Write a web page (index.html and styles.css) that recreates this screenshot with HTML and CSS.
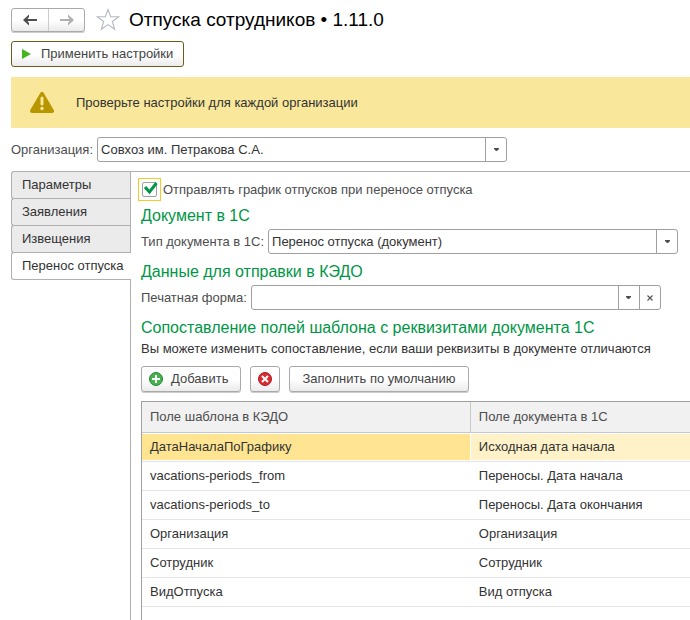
FILE: index.html
```html
<!DOCTYPE html>
<html lang="ru">
<head>
    <meta charset="UTF-8">
    <meta name="viewport" content="width=device-width, initial-scale=1.0">
    <title>Отпуска сотрудников</title>
    <link rel="stylesheet" href="styles.css">
</head>
<body>
    <div class="page">
        <header class="header">
            <div class="nav-buttons">
                <button class="nav-button" type="button" aria-label="Назад">
                    <svg width="14" height="12" viewBox="0 0 14 12"><path d="M0 6L6 .5V3L4.500 5H14v2H4.500L6 9v2.500z" fill="#4d4d4d"/></svg>
                </button>
                <button class="nav-button" type="button" aria-label="Вперед">
                    <svg width="14" height="12" viewBox="0 0 14 12"><path d="M14 6L8 .5V3l1.500 2H0v2h9.500L8 9v2.500z" fill="#b0b0b0"/></svg>
                </button>
            </div>
            <button class="star-button" type="button" aria-label="В избранное">
                <svg width="24" height="23" viewBox="0 0 24 23"><path d="M12 1.500l2.700 7.200h8l-6.400 4.800 2.400 7.800L12 16.600l-6.700 4.700 2.400-7.800L1.300 8.700h8z" fill="#fff" stroke="#b3bac2" stroke-width="1.100"/></svg>
            </button>
            <h1 class="title">Отпуска сотрудников • 1.11.0</h1>
        </header>

        <div class="command-bar">
            <button class="button button-primary" type="button">
                <svg width="10" height="12" viewBox="0 0 10 12"><path d="M0 1l9 5-9 5z" fill="#43b51f"/></svg>
                Применить настройки
            </button>
        </div>

        <div class="warning">
            <svg width="24" height="21" viewBox="0 0 24 21">
                <path d="M12 2L22 19H2z" fill="#b89600" stroke="#b89600" stroke-width="4" stroke-linejoin="round"/>
                <path d="M12 6v6" stroke="#f9e79b" stroke-width="3" stroke-linecap="round"/>
                <circle cx="12" cy="16.500" r="1.700" fill="#f9e79b"/>
            </svg>
            <span>Проверьте настройки для каждой организации</span>
        </div>

        <div class="field field-organization">
            <label for="organization">Организация:</label>
            <div class="combo">
                <select id="organization">
                    <option>Совхоз им. Петракова С.А.</option>
                </select>
                <button class="combo-button" type="button" aria-label="Выбрать организацию">
                    <svg width="5" height="3" viewBox="0 0 5 3"><path d="M0 0h5v1L3 3H2L0 1z" fill="#4d4d4d"/></svg>
                </button>
            </div>
        </div>

        <div class="workspace">
            <nav class="tabs">
                <button class="tab" type="button">Параметры</button>
                <button class="tab" type="button">Заявления</button>
                <button class="tab" type="button">Извещения</button>
                <button class="tab active" type="button">Перенос отпуска</button>
            </nav>

            <main class="panel">
                <div class="check-row">
                    <span class="check-focus"><input class="checkbox" type="checkbox" id="sendSchedule" checked>
                        <svg class="check-mark" width="15" height="13" viewBox="0 0 15 13"><path d="M1 5L5.500 10L12.500 1" fill="none" stroke="#009646" stroke-width="3"/></svg>
                    </span>
                    <label for="sendSchedule">Отправлять график отпусков при переносе отпуска</label>
                </div>

                <h2 class="section-title">Документ в 1С</h2>
                <div class="field">
                    <label for="documentType">Тип документа в 1С:</label>
                    <div class="combo">
                        <select id="documentType">
                            <option>Перенос отпуска (документ)</option>
                        </select>
                        <button class="combo-button" type="button" aria-label="Выбрать тип документа">
                            <svg width="5" height="3" viewBox="0 0 5 3"><path d="M0 0h5v1L3 3H2L0 1z" fill="#4d4d4d"/></svg>
                        </button>
                    </div>
                </div>

                <h2 class="section-title">Данные для отправки в КЭДО</h2>
                <div class="field">
                    <label for="printForm">Печатная форма:</label>
                    <div class="combo">
                        <input type="text" id="printForm">
                        <button class="combo-button" type="button" aria-label="Выбрать печатную форму">
                            <svg width="5" height="3" viewBox="0 0 5 3"><path d="M0 0h5v1L3 3H2L0 1z" fill="#4d4d4d"/></svg>
                        </button>
                        <button class="combo-button" type="button" aria-label="Очистить">
                            <svg width="6" height="6" viewBox="0 0 6 6"><path d="M.5.5l5 5M5.500.5l-5 5" stroke="#555" stroke-width="1.200"/></svg>
                        </button>
                    </div>
                </div>

                <h2 class="section-title">Сопоставление полей шаблона с реквизитами документа 1С</h2>
                <p class="hint">Вы можете изменить сопоставление, если ваши реквизиты в документе отличаются</p>

                <div class="toolbar">
                    <button class="button button-add" type="button">
                        <svg width="14" height="14" viewBox="0 0 14 14"><circle cx="7" cy="7" r="6.500" fill="#45b24b" stroke="#23883a"/><path d="M7 3v8M3 7h8" stroke="#fff" stroke-width="2"/></svg>
                        Добавить
                    </button>
                    <button class="button button-delete" type="button" aria-label="Удалить">
                        <svg width="14" height="14" viewBox="0 0 14 14"><circle cx="7" cy="7" r="6.500" fill="#d92c30" stroke="#b01b20"/><path d="M4 4l6 6M10 4l-6 6" stroke="#fff" stroke-width="2"/></svg>
                    </button>
                    <button class="button" type="button">Заполнить по умолчанию</button>
                </div>

                <div class="table-box">
                    <table class="mapping">
                        <thead>
                            <tr><th>Поле шаблона в КЭДО</th><th>Поле документа в 1С</th></tr>
                        </thead>
                        <tbody>
                            <tr class="selected"><td>ДатаНачалаПоГрафику</td><td>Исходная дата начала</td></tr>
                            <tr><td>vacations-periods_from</td><td>Переносы. Дата начала</td></tr>
                            <tr><td>vacations-periods_to</td><td>Переносы. Дата окончания</td></tr>
                            <tr><td>Организация</td><td>Организация</td></tr>
                            <tr><td>Сотрудник</td><td>Сотрудник</td></tr>
                            <tr><td>ВидОтпуска</td><td>Вид отпуска</td></tr>
                        </tbody>
                    </table>
                </div>
            </main>
        </div>
    </div>
</body>
</html>
```

FILE: styles.css
```css
* {
    box-sizing: border-box;
}
body {
    margin: 0;
    background-color: #ffffff;
    color: #333333;
    font-family: "Liberation Sans", Arial, sans-serif;
    font-size: 13px;
    line-height: 16px;
}
button, input, select {
    font: inherit;
    color: inherit;
    margin: 0;
}
svg {
    display: block;
    flex: none;
}
.page {
    display: flex;
    flex-direction: column;
    min-height: 100vh;
    padding: 7px 0 0 11px;
}
.header {
    display: flex;
    align-items: center;
    height: 25px;
}
.nav-buttons {
    display: flex;
    border: 1px solid #a9a9a9;
    border-radius: 3px;
    background: linear-gradient(#ffffff 50%, #ebebeb);
    box-shadow: 0 1px 0 #cccccc;
}
.nav-button {
    display: flex;
    align-items: center;
    justify-content: center;
    width: 36px;
    height: 22px;
    padding: 0;
    border: none;
    background: transparent;
}
.nav-button + .nav-button {
    border-left: 1px solid #cccccc;
}
.star-button {
    margin: 0 9px 0 11px;
    padding: 0;
    border: none;
    background: transparent;
}
.title {
    margin: 0;
    color: #000000;
    font-size: 19px;
    font-weight: normal;
    line-height: 24px;
}
.command-bar {
    display: flex;
    margin-top: 9px;
}
.button {
    display: flex;
    align-items: center;
    justify-content: center;
    height: 26px;
    padding: 0 12px;
    border: 1px solid #a9a9a9;
    border-radius: 3px;
    background: linear-gradient(#ffffff 50%, #ebebeb);
    box-shadow: 0 1px 0 #cccccc;
    color: #444444;
    white-space: nowrap;
}
.button-primary {
    gap: 9px;
    padding: 0 10px;
    border-color: #6b5d1c;
    box-shadow: none;
}
.warning {
    display: flex;
    align-items: center;
    gap: 22px;
    height: 51px;
    margin-top: 10px;
    padding-left: 19px;
    background-color: #f9e79b;
}
.field {
    display: flex;
    align-items: center;
    gap: 4px;
    color: #4d4d4d;
}
.field-organization {
    margin-top: 9px;
}
.combo {
    display: flex;
    flex: 0 1 410px;
    height: 25px;
    border: 1px solid #a0a0a0;
    border-radius: 3px;
    background-color: #ffffff;
    color: #333333;
}
.combo select,
.combo input {
    appearance: none;
    flex: 1;
    min-width: 0;
    padding: 0 3px;
    border: none;
    outline: none;
    background: transparent;
}
.combo-button {
    display: flex;
    align-items: center;
    justify-content: center;
    width: 21px;
    padding: 0;
    border: none;
    border-left: 1px solid #a0a0a0;
    background: transparent;
}
.workspace {
    display: flex;
    flex: 1;
    margin-top: 9px;
}
.tabs {
    display: flex;
    flex-direction: column;
    flex: none;
    width: 120px;
}
.tab {
    height: 28px;
    margin-bottom: -1px;
    padding: 0 10px;
    border: 1px solid #b0b0b0;
    border-right: none;
    border-radius: 3px 0 0 3px;
    background-color: #ebebeb;
    text-align: left;
    white-space: nowrap;
}
.tab.active {
    position: relative;
    background-color: #ffffff;
}
.panel {
    display: flex;
    flex-direction: column;
    flex: 1;
    min-width: 0;
    margin-left: -1px;
    padding: 6px 0 0 10px;
    border-top: 1px solid #b0b0b0;
    border-left: 1px solid #b0b0b0;
}
.check-row {
    display: flex;
    align-items: center;
    gap: 2px;
    margin: 0 0 -3px -3px;
    color: #4d4d4d;
}
.check-focus {
    display: grid;
    place-items: center;
    position: relative;
    width: 23px;
    height: 23px;
    border: 1px solid #f5cb2c;
}
.checkbox {
    appearance: none;
    width: 15px;
    height: 15px;
    border: 1px solid #a0a0a0;
    border-radius: 2px;
    background-color: #ffffff;
}
.check-mark {
    position: absolute;
    top: 3px;
    left: 5px;
    pointer-events: none;
    visibility: hidden;
}
.checkbox:checked + .check-mark {
    visibility: visible;
}
.section-title {
    margin: 8px 0 3px;
    color: #009646;
    font-size: 16px;
    font-weight: normal;
    line-height: 20px;
}
.hint {
    margin: 0;
}
.toolbar {
    display: flex;
    gap: 9px;
    margin-top: 9px;
}
.button-add {
    gap: 8px;
    padding: 0 12px 0 7px;
}
.button-delete {
    width: 30px;
    padding: 0;
}
.table-box {
    flex: 1;
    margin-top: 9px;
    border-top: 1px solid #a0a0a0;
    border-left: 1px solid #a0a0a0;
}
.mapping {
    width: 100%;
    border-collapse: separate;
    border-spacing: 0;
    table-layout: fixed;
}
.mapping th,
.mapping td {
    padding: 0 8px;
    text-align: left;
    font-weight: normal;
}
.mapping th {
    height: 31px;
    border-bottom: 1px solid #c8c8c8;
    background-color: #f1f1f1;
    color: #4d4d4d;
}
.mapping th:first-child {
    width: 60%;
    border-right: 1px solid #c8c8c8;
}
.mapping td {
    height: 29px;
    border-bottom: 1px solid #e4e4e4;
}
.mapping .selected td {
    background-color: #fff2c8;
    box-shadow: inset 0 1px 0 #ffffff, inset 0 -1px 0 #ffffff;
}
.mapping .selected td:first-child {
    border-right: 1px solid #ffffff;
    background-color: #ffe591;
}
```
